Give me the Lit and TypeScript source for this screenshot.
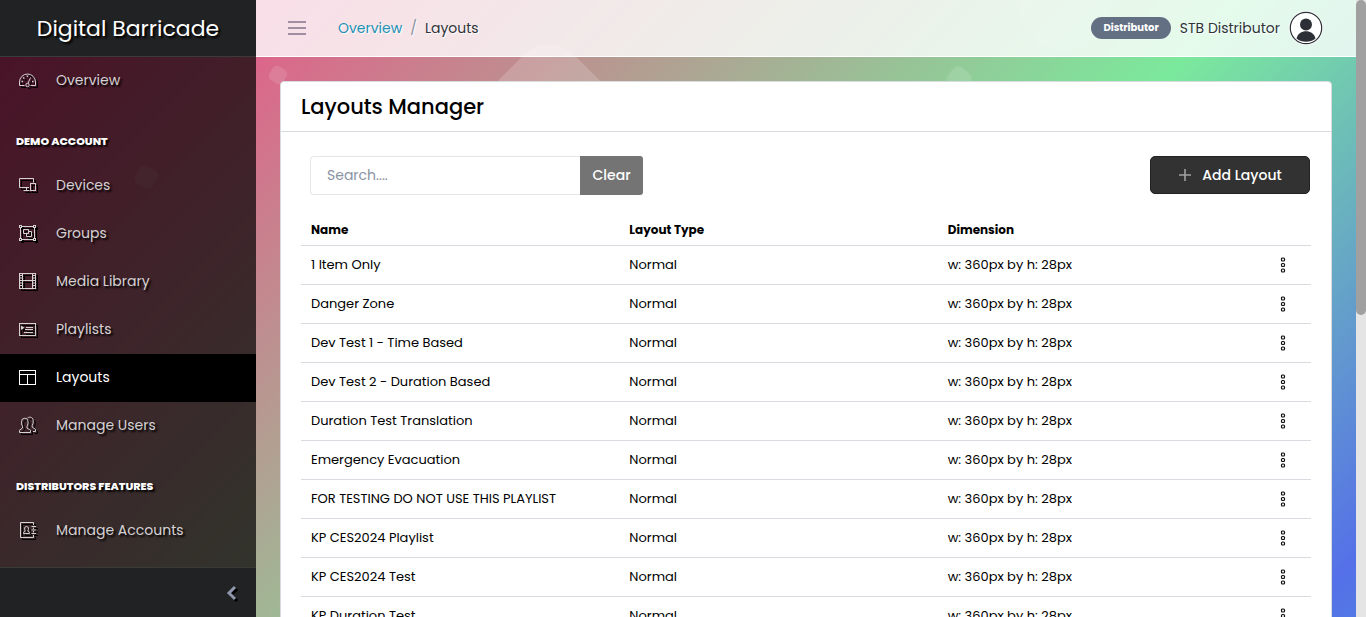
import { LitElement, html, svg, css } from "lit";
import { customElement, state } from "lit/decorators.js";

const icons = {
  speedometer: svg`<path d="M6.500 14.500h-5V11a8 8 0 0 1 16 0v3.500h-5"/><circle cx="9.500" cy="14" r="1.700"/><path d="M10 12.300 12.500 6.500"/><path d="M3.500 10.500h1.500M5 7h1.500M8.700 5.200h1.500M14 10.500h1.500" stroke-width="1.500"/>`,
  devices: svg`<path d="M11 11.500H1.500v-9h14v4M5.500 14.500h6M8.500 11.500v3"/><rect x="12.500" y="7.500" width="5" height="7"/>`,
  group: svg`<path d="M3 2.500h13M3 15.500h13M2.500 3v12M16.500 3v12"/><g fill="currentColor" stroke="none"><path d="M1 1h3v3H1zM15 1h3v3h-3zM1 14h3v3H1zM15 14h3v3h-3z"/></g><g fill="#24101a" stroke="none"><path d="M2 2h1v1H2zM16 2h1v1h-1zM2 15h1v1H2zM16 15h1v1h-1z"/></g><path d="M5.500 5.500h5v4h-5zM8.500 9.500v3h5v-5h-3"/>`,
  film: svg`<rect x="1.500" y="1.500" width="16" height="15"/><path d="M4.500 1v16M14.500 1v16M4.500 8.500h10M1 3.500h3M1 6h3M1 8.500h3M1 11h3M1 13.500h3M15 3.500h3M15 6h3M15 8.500h3M15 11h3M15 13.500h3"/>`,
  playlist: svg`<rect x="1.500" y="3.500" width="16" height="12"/><path d="M8 7.500h7M7 9.500h8M6 12.500h9"/><path d="M3 5.500v4.500l3.500-2.200z" fill="currentColor" stroke="none"/>`,
  layout: svg`<rect x="1.500" y="2.500" width="16" height="14"/><path d="M1.500 6.500h16M9.500 6.500v10"/>`,
  people: svg`<path d="M1.500 16.500v-2.200l3-2.300v-1.700C3.500 8.700 3.500 7.200 3.500 5.800a3.300 3.600 0 0 1 6.600 0c0 1.400-.1 2.900-1.100 4.500V12l3.500 2.300v2.200z"/><path d="M9.500 1.800c3-1.600 6 0 5.700 3.400 0 1.600-.2 2.900-1 4.200v1.700l3.300 2.300v2.100h-2.500"/>`,
  contacts: svg`<path d="M15.500 4V1.500h-13v15h13V14M15.500 6.500v1.500M15.500 10v1.500"/><path d="M13.500 5.500H18M13.500 9H18M13.500 12.500H18"/><path d="M5.500 12.500v-1.200l1.700-1.200C6 7.500 6.500 5.500 8.500 5.500s2.500 2 1.300 4.600l1.700 1.200v1.200z"/>`,
};

interface NavItem { label: string; icon: keyof typeof icons; }

const accountNav: NavItem[] = [
  { label: "Devices", icon: "devices" },
  { label: "Groups", icon: "group" },
  { label: "Media Library", icon: "film" },
  { label: "Playlists", icon: "playlist" },
  { label: "Layouts", icon: "layout" },
  { label: "Manage Users", icon: "people" },
];

const layoutNames = [
  "1 Item Only",
  "Danger Zone",
  "Dev Test 1 - Time Based",
  "Dev Test 2 - Duration Based",
  "Duration Test Translation",
  "Emergency Evacuation",
  "FOR TESTING DO NOT USE THIS PLAYLIST",
  "KP CES2024 Playlist",
  "KP CES2024 Test",
  "KP Duration Test",
];

@customElement("app-sidebar")
export class AppSidebar extends LitElement {
  static styles = css`
    :host { display: flex; flex-direction: column; width: 256px; flex: none; background: rgba(0, 0, 0, 0.7); color: #d6d1d3; font-size: 14px; text-shadow: 2px 2px 2px #000; }
    .brand { height: 56px; flex: none; display: flex; align-items: center; justify-content: center; background: #212223; border-bottom: 1px solid #3a3b3a; color: #fff; font-size: 22px; }
    nav { flex: 1; min-height: 0; overflow: hidden; }
    .item { box-sizing: border-box; display: flex; align-items: center; height: 48px; padding: 0 18px 2px; gap: 20px; color: inherit; text-decoration: none; }
    .item.active { background: #000; color: #fff; }
    .item svg { width: 18px; height: 18px; flex: none; overflow: visible; fill: none; stroke: currentColor; stroke-width: 1; filter: drop-shadow(2px 2px 0 #000); }
    h2 { margin: 0; padding: 28px 16px 13px; font-size: 11px; line-height: 16px; font-weight: 800; color: #fff; text-transform: uppercase; }
    .fold { height: 50px; flex: none; display: flex; align-items: center; justify-content: flex-end; padding: 0 19px; border: 0; border-top: 1px solid #3a3b38; background: #212223; color: #8e97ab; }
    .fold svg { width: 12px; height: 16px; fill: none; stroke: currentColor; stroke-width: 3; filter: drop-shadow(2px 2px 0 #000); }
  `;

  private item(n: NavItem) {
    const active = n.label === "Layouts";
    return html`<a class="item ${active ? "active" : ""}" href="#"><svg viewBox="0 0 18 18" aria-hidden="true">${icons[n.icon]}</svg><span>${n.label}</span></a>`;
  }

  render() {
    return html`
      <div class="brand">Digital Barricade</div>
      <nav>
        ${this.item({ label: "Overview", icon: "speedometer" })}
        <h2>Demo Account</h2>
        ${accountNav.map((n) => this.item(n))}
        <h2>Distributors Features</h2>
        ${this.item({ label: "Manage Accounts", icon: "contacts" })}
      </nav>
      <button class="fold" aria-label="Collapse sidebar"><svg viewBox="0 0 12 16"><path d="M10 2 4 8l6 6"/></svg></button>
    `;
  }
}

@customElement("app-topbar")
export class AppTopbar extends LitElement {
  static styles = css`
    :host { display: flex; align-items: center; height: 56px; flex: none; padding: 0 33px 0 32px; background: rgba(255, 255, 255, 0.8); border-bottom: 1px solid #fff; color: #303338; font-size: 14px; text-shadow: 1px 1px 1px #fff; }
    .menu { border: 0; padding: 0; background: none; color: #83748a; line-height: 0; }
    .menu svg { width: 18px; height: 16px; fill: none; stroke: currentColor; stroke-width: 1.600; }
    .crumbs { display: flex; gap: 8px; padding-left: 32px; flex: 1; }
    a { color: #2290b2; text-decoration: none; }
    .slash { color: #8a93a2; }
    .user { display: flex; align-items: center; gap: 9px; }
    .role { background: #636f83; color: #fff; border-radius: 11px; padding: 0 12px 1px; line-height: 21px; font-size: 10px; font-weight: 700; text-shadow: none; }
    .avatar { width: 34px; height: 34px; }
  `;

  render() {
    return html`
      <button class="menu" aria-label="Toggle menu"><svg viewBox="0 0 18 16"><path d="M0 2h18M0 8h18M0 14h18"/></svg></button>
      <nav class="crumbs" aria-label="Breadcrumb"><a href="#">Overview</a><span class="slash">/</span><span>Layouts</span></nav>
      <div class="user">
        <span class="role">Distributor</span>
        <span>STB Distributor</span>
        <svg class="avatar" viewBox="0 0 34 34" aria-hidden="true">
          <circle cx="17" cy="17" r="17" fill="#fff"/>
          <circle cx="17" cy="17" r="15.700" fill="#fff" stroke="#2c3036" stroke-width="1.200"/>
          <circle cx="17" cy="13.500" r="6" fill="#2c3036"/>
          <path d="M7.500 27.500c1.300-5 5-7.200 9.500-7.200s8.200 2.200 9.500 7.200c-5.300 4.300-13.700 4.300-19 0z" fill="#2c3036"/>
        </svg>
      </div>
    `;
  }
}

@customElement("layouts-card")
export class LayoutsCard extends LitElement {
  static styles = css`
    :host { display: block; background: #fff; border: 1px solid #d8dbe0; border-radius: 4px; color: #000; }
    h1 { margin: 0; padding: 0 20px; line-height: 49px; border-bottom: 1px solid #d8dbe0; font-size: 21px; font-weight: 500; }
    .body { padding: 24px 20px; }
    .tools { display: flex; justify-content: space-between; padding: 0 1px 0 9px; font-size: 14px; }
    .search { display: flex; }
    input { box-sizing: border-box; width: 270px; height: 39px; padding: 0 16px; border: 1px solid #e4e7ea; border-right: 0; border-radius: 4px 0 0 4px; font: inherit; color: #000; }
    input::placeholder { color: #8a93a2; }
    .clear { width: 63px; padding: 0; border: 0; border-radius: 0 3px 3px 0; background: #747474; color: #fff; font: inherit; font-weight: 500; }
    .add { display: flex; align-items: center; justify-content: center; gap: 10px; width: 160px; height: 38px; border: 1px solid #212223; border-radius: 5px; background: #323232; color: #fff; font: inherit; font-weight: 500; }
    .add svg { width: 14px; height: 14px; stroke: #a2a2a2; stroke-width: 1.600; }
    table { width: 100%; margin-top: 20px; border-collapse: collapse; table-layout: fixed; font-size: 13px; }
    th { height: 30px; padding: 0 10px; text-align: left; font-size: 12px; font-weight: 700; }
    td { height: 38px; padding: 0 10px; border-top: 1px solid #d8dbe0; }
    .actions { width: 35px; }
    .more { display: block; padding: 0 14px; border: 0; background: none; line-height: 0; }
    .more svg { width: 6px; height: 16px; fill: none; stroke: #111; stroke-width: 1.200; }
  `;

  @state() private query = "";

  render() {
    const rows = layoutNames.filter((n) => n.toLowerCase().includes(this.query.toLowerCase()));
    return html`
      <h1>Layouts Manager</h1>
      <div class="body">
        <div class="tools">
          <div class="search">
            <input type="text" aria-label="Search layouts" placeholder="Search...." .value=${this.query} @input=${(e: Event) => (this.query = (e.target as HTMLInputElement).value)} />
            <button class="clear" @click=${() => (this.query = "")}>Clear</button>
          </div>
          <button class="add"><svg viewBox="0 0 14 14"><path d="M7 1v12M1 7h12"/></svg>Add Layout</button>
        </div>
        <table>
          <thead><tr><th>Name</th><th>Layout Type</th><th>Dimension</th><th class="actions"></th></tr></thead>
          <tbody>
            ${rows.map((name) => html`<tr>
              <td>${name}</td><td>Normal</td><td>w: 360px by h: 28px</td>
              <td><button class="more" aria-label="Actions for ${name}"><svg viewBox="0 0 6 16"><rect x="1.500" y="1" width="3" height="3" rx="1"/><rect x="1.500" y="6.500" width="3" height="3" rx="1"/><rect x="1.500" y="12" width="3" height="3" rx="1"/></svg></button></td>
            </tr>`)}
          </tbody>
        </table>
      </div>
    `;
  }
}

@customElement("app-root")
export class AppRoot extends LitElement {
  static styles = css`
    :host { display: flex; height: 100vh; overflow: hidden; font-family: Poppins, Inter, "Open Sans", sans-serif; background: #e5e5e5; }
    .shell { position: relative; z-index: 0; display: flex; flex: 1; min-width: 0; background: linear-gradient(135deg, #fd3a84 0%, #7be99c 63%, #5570e8 97%, #5278e4 100%); }
    .shapes { position: absolute; inset: 0; z-index: -1; width: 100%; height: 100%; fill: #fff; }
    .page { display: flex; flex-direction: column; flex: 1; min-width: 0; }
    main { flex: 1; min-height: 0; overflow-y: auto; scrollbar-width: none; padding: 24px; }
    .track { width: 10px; flex: none; background: #e5e5e5; }
    .thumb { height: 51%; border-radius: 5px; background: #a0a0a0; }
  `;

  render() {
    return html`
      <div class="shell">
        <svg class="shapes" aria-hidden="true">
          <rect x="-80" y="-80" width="160" height="160" rx="36" fill-opacity="0.170" transform="translate(549 143) rotate(45)"/>
          <rect x="-8" y="-8" width="16" height="16" rx="5" fill-opacity="0.120" transform="translate(278 75) rotate(30)"/>
          <rect x="-11" y="-11" width="22" height="22" rx="7" fill-opacity="0.120" transform="translate(959 79) rotate(40)"/>
          <rect x="-10" y="-10" width="20" height="20" rx="5" fill-opacity="0.120" transform="translate(146 177) rotate(30)"/>
          <circle cx="1065" cy="5" r="46" fill-opacity="0.080"/>
        </svg>
        <app-sidebar></app-sidebar>
        <div class="page">
          <app-topbar></app-topbar>
          <main><layouts-card></layouts-card></main>
        </div>
      </div>
      <div class="track" aria-hidden="true"><div class="thumb"></div></div>
    `;
  }
}
